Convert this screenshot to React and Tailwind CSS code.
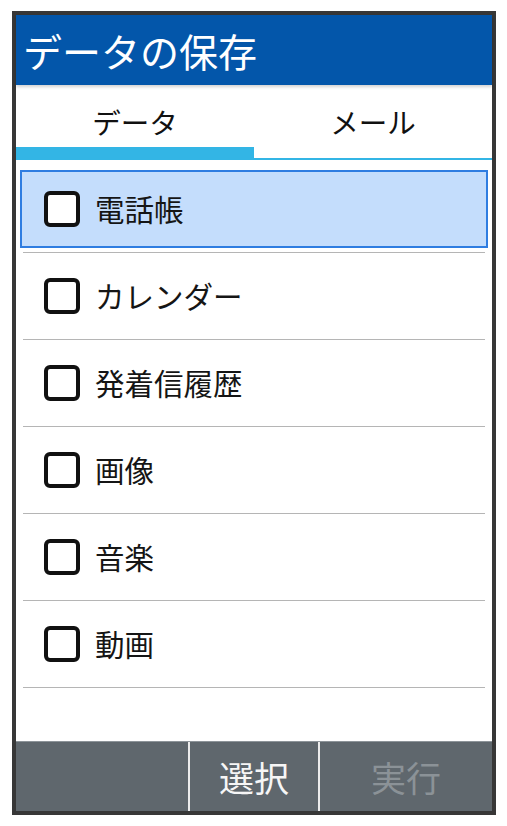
export default function App() {
  const items = ["電話帳", "カレンダー", "発着信履歴", "画像", "音楽", "動画"];
  return (
    <div className="w-[507px] h-[826px] bg-white pt-[11px] pl-[12px] font-['Noto_Sans_CJK_JP','Noto_Sans_CJK_SC',sans-serif]">
      <div className="w-[484px] h-[804px] border-4 border-[#373737] flex flex-col bg-white">
        <div className="relative z-10 h-[70px] bg-[#0356aa] flex items-center pl-[7px] shadow-[0_2px_3px_rgba(0,0,0,0.18)]">
          <span className="text-white text-[39px] leading-none">データの保存</span>
        </div>
        <div className="flex h-[73px]">
          <div className="flex-1 flex flex-col">
            <div className="flex-1 flex items-center justify-center pt-[13px] text-[28.5px] leading-none text-[#111]">データ</div>
            <div className="h-[11px] bg-[#33b5e5]" />
          </div>
          <div className="flex-1 flex flex-col">
            <div className="flex-1 flex items-center justify-center pt-[13px] text-[28.5px] leading-none text-[#111]">メール</div>
            <div className="h-[11px]" />
          </div>
        </div>
        <div className="h-[2px] bg-[#33b5e5]" />
        <div className="pt-[6px] flex flex-col">
          {items.map((it, i) => (
            <div key={it} className="flex flex-col">
              <div className="h-[86px] p-[4px]">
                <div
                  className={
                    i === 0
                      ? "h-full border-2 border-[#2f7de1] bg-[#c4ddfc] flex items-center pl-[22px] gap-[15px]"
                      : "h-full border-2 border-transparent flex items-center pl-[22px] gap-[15px]"
                  }
                >
                  <div className="w-[36px] h-[36px] border-4 border-[#111] rounded-[6px] bg-white" />
                  <span className="text-[29.5px] leading-none text-[#151515]">{it}</span>
                </div>
              </div>
              <div className="h-px mx-[7px] bg-[#b5b5b5]" />
            </div>
          ))}
        </div>
        <div className="flex-1" />
        <div className="h-[70px] bg-[#5f676d] border-t border-[#8d9499] flex">
          <div className="w-[172px]" />
          <div className="w-[2px] bg-[#ececec]" />
          <div className="w-[128px] flex items-center justify-center text-[35px] leading-none text-[#f6f6f6]">選択</div>
          <div className="w-[2px] bg-[#ececec]" />
          <div className="flex-1 flex items-center justify-center text-[35px] leading-none text-[#8b9297]">実行</div>
        </div>
      </div>
    </div>
  );
}
